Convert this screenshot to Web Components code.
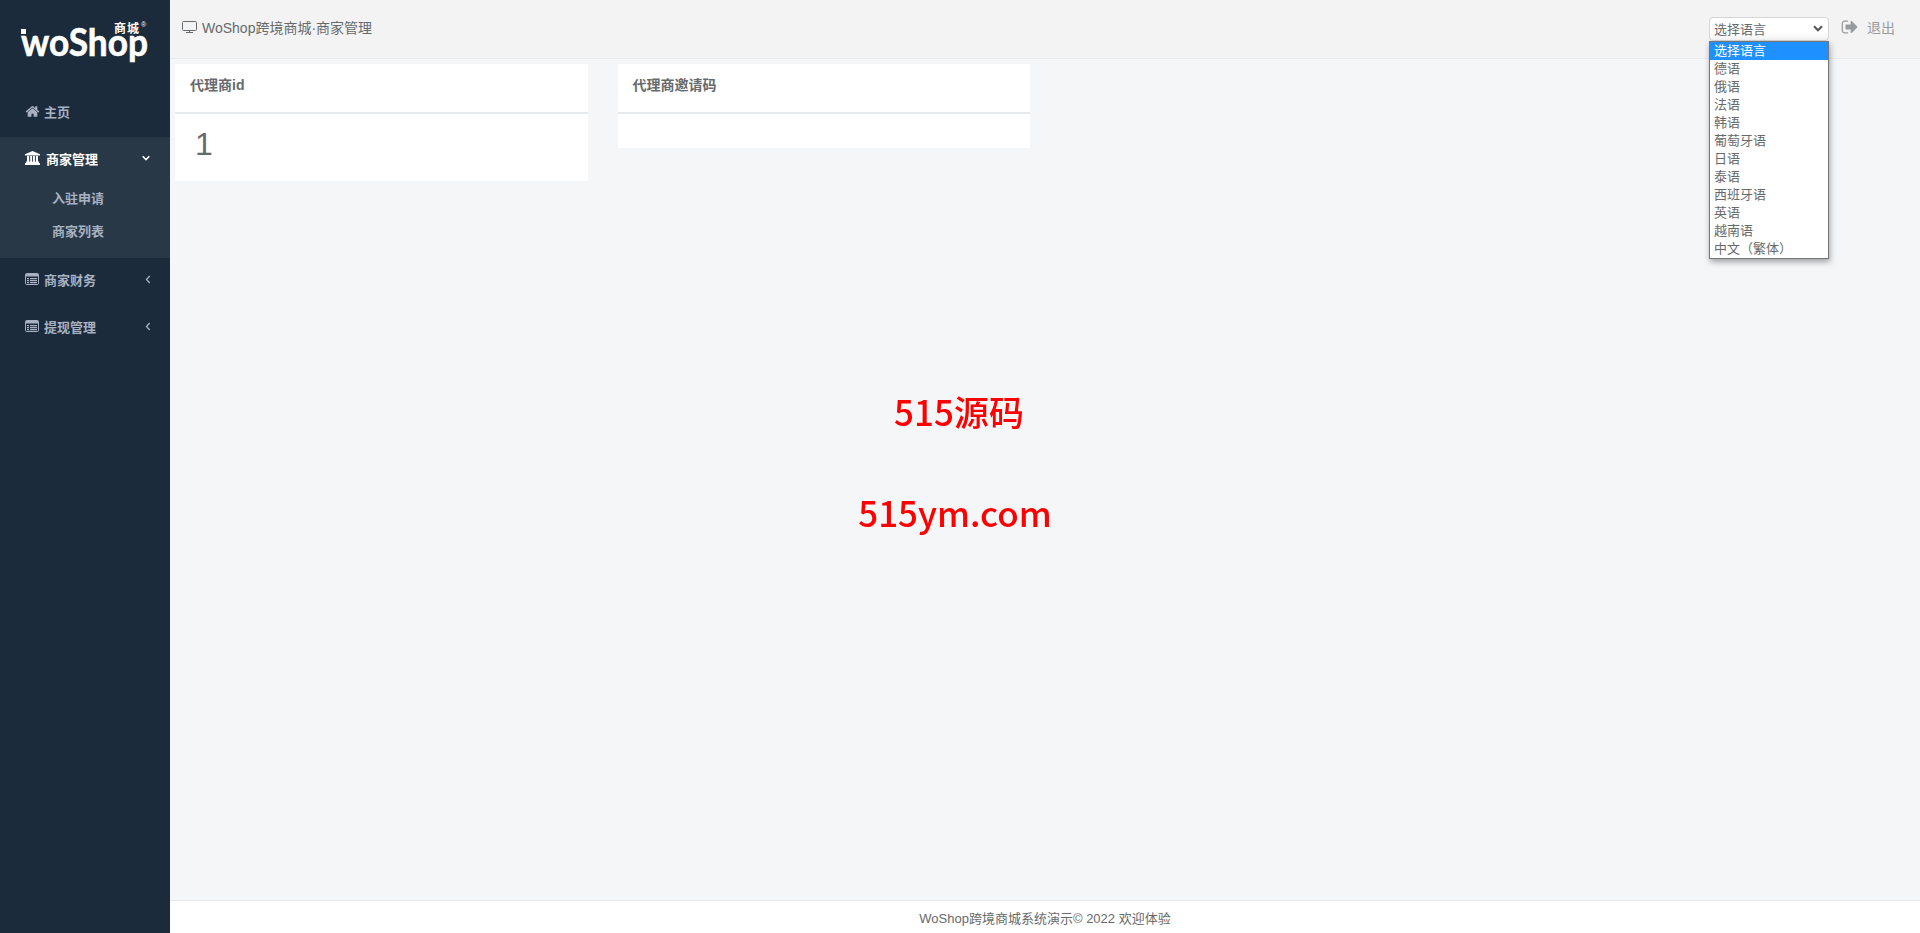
<!DOCTYPE html>
<html lang="zh">
<head>
<meta charset="utf-8">
<title>WoShop跨境商城</title>
<style>
    html, body {
        margin: 0;
        height: 100%;
        overflow: hidden;
    }

    body {
        display: flex;
        background: #f5f6f8;
        color: #676a6c;
        font: 13px "Liberation Sans", "Noto Sans CJK SC", sans-serif;
    }
</style>
</head>
<body>
    <shop-sidebar>
        <nav-item icon="home" label="主页"></nav-item>
        <nav-group icon="bank" label="商家管理" open>
            <nav-sub>入驻申请</nav-sub>
            <nav-sub>商家列表</nav-sub>
        </nav-group>
        <nav-group icon="list" label="商家财务"></nav-group>
        <nav-group icon="list" label="提现管理"></nav-group>
    </shop-sidebar>

    <main-panel>
        <shop-topbar title-text="WoShop跨境商城·商家管理"></shop-topbar>
        <card-row>
            <stat-card heading="代理商id" value="1"></stat-card>
            <stat-card heading="代理商邀请码"></stat-card>
        </card-row>
        <shop-footer>WoShop跨境商城系统演示© 2022 欢迎体验</shop-footer>
    </main-panel>

    <water-mark></water-mark>

<script>
const ICONS = {
    home: `<svg viewBox="0 0 1792 1792" width="15" height="15" fill="currentColor"><path d="M1472 992v480q0 26-19 45t-45 19h-384v-384h-256v384h-384q-26 0-45-19t-19-45v-480q0-1 .5-3t.5-3l575-474 575 474q1 2 1 6zm223-69l-62 74q-8 9-21 11h-3q-13 0-21-7l-692-577-692 577q-12 8-24 7-13-2-21-11l-62-74q-8-10-7-23.5t11-21.5l719-599q32-26 76-26t76 26l244 204v-195q0-14 9-23t23-9h192q14 0 23 9t9 23v408l219 182q10 8 11 21.5t-7 23.5z"/></svg>`,
    bank: `<svg viewBox="0 0 15 14" width="15" height="14" fill="currentColor"><path d="M7.5 0L15 3.200V4.500H0V3.200z"/><path d="M2 5h2.200v5.500H2zM5.200 5h1.900v5.500H5.200zM8 5h1.900v5.500H8zM10.900 5H13v5.500h-2.100zM1 10.500h13V12H1zM0 12h15v2H0z"/></svg>`,
    list: `<svg viewBox="0 0 14 12" width="14" height="12"><rect x=".5" y=".5" width="13" height="11" rx="1" fill="none" stroke="currentColor"/><path d="M1 1h12v2.500H1z" fill="currentColor"/><path d="M2 5h2v1.200H2zM5 5h7v1.200H5zM2 7h2v1.200H2zM5 7h7v1.200H5zM2 9h2v1.200H2zM5 9h7v1.200H5z" fill="currentColor"/></svg>`
};

class ShopSidebar extends HTMLElement {
    #template = `
        <style>
            :host {
                display: block;
                flex: 0 0 170px;
                height: 100%;
                background: #1c2b3c;
                color: #a7b1c2;
            }

            .logo {
                display: block;
                height: 88px;
            }

            .logo text {
                fill: #fff;
            }
        </style>

        <svg class="logo" width="170" height="88" viewBox="0 0 170 88">
            <rect x="21" y="29" width="5" height="5" fill="#fff"/>
            <text x="21" y="56" font-family="Lato" font-weight="700" font-size="38" stroke="#fff" stroke-width=".6" textLength="127" lengthAdjust="spacingAndGlyphs">woShop</text>
            <text x="114" y="33" font-family="Noto Sans CJK SC" font-weight="700" font-size="12" letter-spacing="1">商城</text>
            <text x="141" y="27" font-family="Liberation Sans" font-size="7">®</text>
        </svg>
        <slot></slot>
    `;

    constructor() {
        super();
        this.attachShadow({ mode: 'open' }).innerHTML = this.#template;
    }
}

class NavItem extends HTMLElement {
    #template = `
        <style>
            :host {
                display: flex;
                align-items: center;
                box-sizing: border-box;
                height: 49px;
                padding: 0 0 2px 25px;
                font-size: 13px;
                font-weight: 600;
                color: #a7b1c2;
            }

            .icon {
                display: flex;
                margin-right: 4px;
            }
        </style>

        <span class="icon"></span><span id="tSpnLabel"></span>
    `;

    constructor() {
        super();
        this.attachShadow({ mode: 'open' }).innerHTML = this.#template;
    }

    connectedCallback() {
        this.shadowRoot.querySelector('.icon').innerHTML = ICONS[this.getAttribute('icon')];
        this.shadowRoot.querySelector('#tSpnLabel').textContent = this.getAttribute('label');
    }
}

class NavGroup extends HTMLElement {
    #template = `
        <style>
            :host {
                display: block;
                font-size: 13px;
                font-weight: 600;
                color: #a7b1c2;
            }

            :host([open]) {
                background: #293846;
                padding-bottom: 11px;
            }

            .head {
                display: flex;
                align-items: center;
                box-sizing: border-box;
                height: 47px;
                padding: 0 19px 5px 25px;
            }

            :host([open]) .head {
                height: 44px;
                padding: 0 20px 2px 25px;
                color: #fff;
                font-weight: 700;
            }

            .icon {
                display: flex;
                margin-right: 5px;
            }

            :host([open]) .icon {
                margin-right: 6px;
            }

            .label {
                flex: 1;
            }

            .arrow {
                display: flex;
            }
        </style>

        <div class="head">
            <span class="icon"></span>
            <span class="label"></span>
            <span class="arrow"></span>
        </div>
        <slot></slot>
    `;

    constructor() {
        super();
        this.attachShadow({ mode: 'open' }).innerHTML = this.#template;
    }

    connectedCallback() {
        const open = this.hasAttribute('open');
        this.shadowRoot.querySelector('.icon').innerHTML = ICONS[this.getAttribute('icon')];
        this.shadowRoot.querySelector('.label').textContent = this.getAttribute('label');
        this.shadowRoot.querySelector('.arrow').innerHTML = open
            ? `<svg width="8" height="6" viewBox="0 0 8 6"><path d="M.7 1.300L4 4.600l3.300-3.300" fill="none" stroke="currentColor" stroke-width="1.500"/></svg>`
            : `<svg width="6" height="9" viewBox="0 0 6 9"><path d="M4.700 1L1.500 4.500l3.200 3.500" fill="none" stroke="currentColor" stroke-width="1.300"/></svg>`;
    }
}

class NavSub extends HTMLElement {
    #template = `
        <style>
            :host {
                display: flex;
                align-items: center;
                height: 33px;
                padding-left: 52px;
                font-size: 13px;
                font-weight: 600;
                color: #a7b1c2;
            }
        </style>

        <slot></slot>
    `;

    constructor() {
        super();
        this.attachShadow({ mode: 'open' }).innerHTML = this.#template;
    }
}

class MainPanel extends HTMLElement {
    #template = `
        <style>
            :host {
                flex: 1;
                display: flex;
                flex-direction: column;
                min-width: 0;
                height: 100%;
            }
        </style>

        <slot></slot>
    `;

    constructor() {
        super();
        this.attachShadow({ mode: 'open' }).innerHTML = this.#template;
    }
}

class ShopTopbar extends HTMLElement {
    #template = `
        <style>
            :host {
                display: flex;
                align-items: center;
                box-sizing: border-box;
                height: 59px;
                padding: 0 25px 2px 12px;
                background: #f3f3f4;
                border-bottom: 1px solid #e7eaec;
                font-size: 14px;
                color: #676a6c;
            }

            .title {
                flex: 1;
                display: flex;
                align-items: center;
                gap: 5px;
                padding-bottom: 3px;
            }

            lang-select {
                margin-top: 2px;
            }

            .logout {
                display: flex;
                align-items: center;
                gap: 8px;
                margin: 0 0 2px 12px;
                color: #999c9e;
            }
        </style>

        <div class="title">
            <svg width="15" height="14" viewBox="0 0 15 14">
                <rect x=".5" y="1.500" width="14" height="9" rx="1" fill="none" stroke="currentColor"/>
                <path d="M4 12.500h7M7.500 10.500v2" fill="none" stroke="currentColor"/>
            </svg>
            <span id="tSpnTitle"></span>
        </div>
        <lang-select></lang-select>
        <div class="logout">
            <svg width="18" height="18" viewBox="0 0 1792 1792" fill="currentColor"><path d="M704 1440q0 4 1 20t.5 26.5-3 23.5-10 19.5-20.5 6.5h-320q-119 0-203.5-84.5t-84.5-203.5v-704q0-119 84.500-203.500t203.500-84.500h320q13 0 22.500 9.500t9.500 22.500q0 4 1 20t.5 26.500-3 23.500-10 19.500-20.500 6.500h-320q-66 0-113 47t-47 113v704q0 66 47 113t113 47h312l11.500 1 11.500 3 8 5.500 7 9 2 13.500zm928-544q0 26-19 45l-544 544q-19 19-45 19t-45-19-19-45v-288h-448q-26 0-45-19t-19-45v-384q0-26 19-45t45-19h448v-288q0-26 19-45t45-19 45 19l544 544q19 19 19 45z"/></svg>
            <span>退出</span>
        </div>
    `;

    constructor() {
        super();
        this.attachShadow({ mode: 'open' }).innerHTML = this.#template;
    }

    connectedCallback() {
        this.shadowRoot.querySelector('#tSpnTitle').textContent = this.getAttribute('title-text');
    }
}

class LangSelect extends HTMLElement {
    #languages = ['选择语言', '德语', '俄语', '法语', '韩语', '葡萄牙语', '日语', '泰语', '西班牙语', '英语', '越南语', '中文（繁体）'];

    #template = `
        <style>
            :host {
                display: block;
                position: relative;
                width: 120px;
                height: 24px;
                font-size: 13px;
                color: #676a6c;
            }

            .box {
                display: flex;
                align-items: center;
                justify-content: space-between;
                box-sizing: border-box;
                height: 24px;
                padding: 0 5px 2px 4px;
                background: linear-gradient(#fff 60%, #f4f4f4);
                border: 1px solid #d5d5d5;
                border-radius: 4px;
            }

            .menu {
                position: absolute;
                left: 0;
                top: 24px;
                width: 120px;
                box-sizing: border-box;
                background: #fff;
                border: 1px solid #767676;
                box-shadow: 1px 3px 6px rgba(0, 0, 0, .35);
                z-index: 2;
            }

            .menu div {
                height: 18px;
                line-height: 18px;
                padding-left: 4px;
                white-space: nowrap;
            }

            .menu .on {
                background: #1e90ff;
                color: #fff;
            }
        </style>

        <div class="box">
            <span>选择语言</span>
            <svg width="10" height="7" viewBox="0 0 10 7"><path d="M1 1.300l4 4 4-4" fill="none" stroke="#555" stroke-width="2"/></svg>
        </div>
        <div class="menu"></div>
    `;

    constructor() {
        super();
        this.attachShadow({ mode: 'open' }).innerHTML = this.#template;
    }

    connectedCallback() {
        const menu = this.shadowRoot.querySelector('.menu');
        this.#languages.forEach((lang, i) => {
            const row = document.createElement('div');
            row.textContent = lang;
            if (i === 0) row.className = 'on';
            menu.append(row);
        });
    }
}

class CardRow extends HTMLElement {
    #template = `
        <style>
            :host {
                flex: 1;
                display: flex;
                align-items: flex-start;
                gap: 30px;
                padding: 5px 0 0 5px;
            }
        </style>

        <slot></slot>
    `;

    constructor() {
        super();
        this.attachShadow({ mode: 'open' }).innerHTML = this.#template;
    }
}

class StatCard extends HTMLElement {
    #template = `
        <style>
            :host {
                display: block;
                flex: 0 0 412.5px;
                background: #fff;
                color: #676a6c;
            }

            .head {
                box-sizing: border-box;
                height: 50px;
                padding: 10px 15px 0;
                border-bottom: 2px solid #e7eaec;
                font-size: 14px;
                font-weight: 700;
            }

            .body {
                box-sizing: border-box;
                min-height: 34px;
                padding: 0 20px;
            }

            .value {
                height: 67px;
                padding-top: 14px;
                box-sizing: border-box;
                font-size: 32px;
                line-height: 33px;
            }
        </style>

        <div class="head" id="tDivHead"></div>
        <div class="body"></div>
    `;

    constructor() {
        super();
        this.attachShadow({ mode: 'open' }).innerHTML = this.#template;
    }

    connectedCallback() {
        this.shadowRoot.querySelector('#tDivHead').textContent = this.getAttribute('heading');
        const value = this.getAttribute('value');
        if (value) {
            const div = document.createElement('div');
            div.className = 'value';
            div.textContent = value;
            this.shadowRoot.querySelector('.body').append(div);
        }
    }
}

class ShopFooter extends HTMLElement {
    #template = `
        <style>
            :host {
                display: flex;
                align-items: center;
                justify-content: center;
                box-sizing: border-box;
                height: 33px;
                padding-top: 1px;
                background: #fff;
                border-top: 1px solid #e7eaec;
                font-size: 13px;
                color: #676a6c;
            }
        </style>

        <slot></slot>
    `;

    constructor() {
        super();
        this.attachShadow({ mode: 'open' }).innerHTML = this.#template;
    }
}

class WaterMark extends HTMLElement {
    #template = `
        <style>
            :host {
                position: fixed;
                left: 0;
                right: 2px;
                top: 381px;
                display: flex;
                flex-direction: column;
                align-items: center;
                gap: 41px;
                font: 500 35px/60px "Noto Sans CJK SC", "Noto Sans", sans-serif;
                color: #ff0000;
                pointer-events: none;
            }

            .url {
                margin-right: 8px;
            }
        </style>

        <div>515源码</div>
        <div class="url">515ym.com</div>
    `;

    constructor() {
        super();
        this.attachShadow({ mode: 'open' }).innerHTML = this.#template;
    }
}

customElements.define('shop-sidebar', ShopSidebar);
customElements.define('nav-item', NavItem);
customElements.define('nav-group', NavGroup);
customElements.define('nav-sub', NavSub);
customElements.define('main-panel', MainPanel);
customElements.define('shop-topbar', ShopTopbar);
customElements.define('lang-select', LangSelect);
customElements.define('card-row', CardRow);
customElements.define('stat-card', StatCard);
customElements.define('shop-footer', ShopFooter);
customElements.define('water-mark', WaterMark);
</script>
</body>
</html>
